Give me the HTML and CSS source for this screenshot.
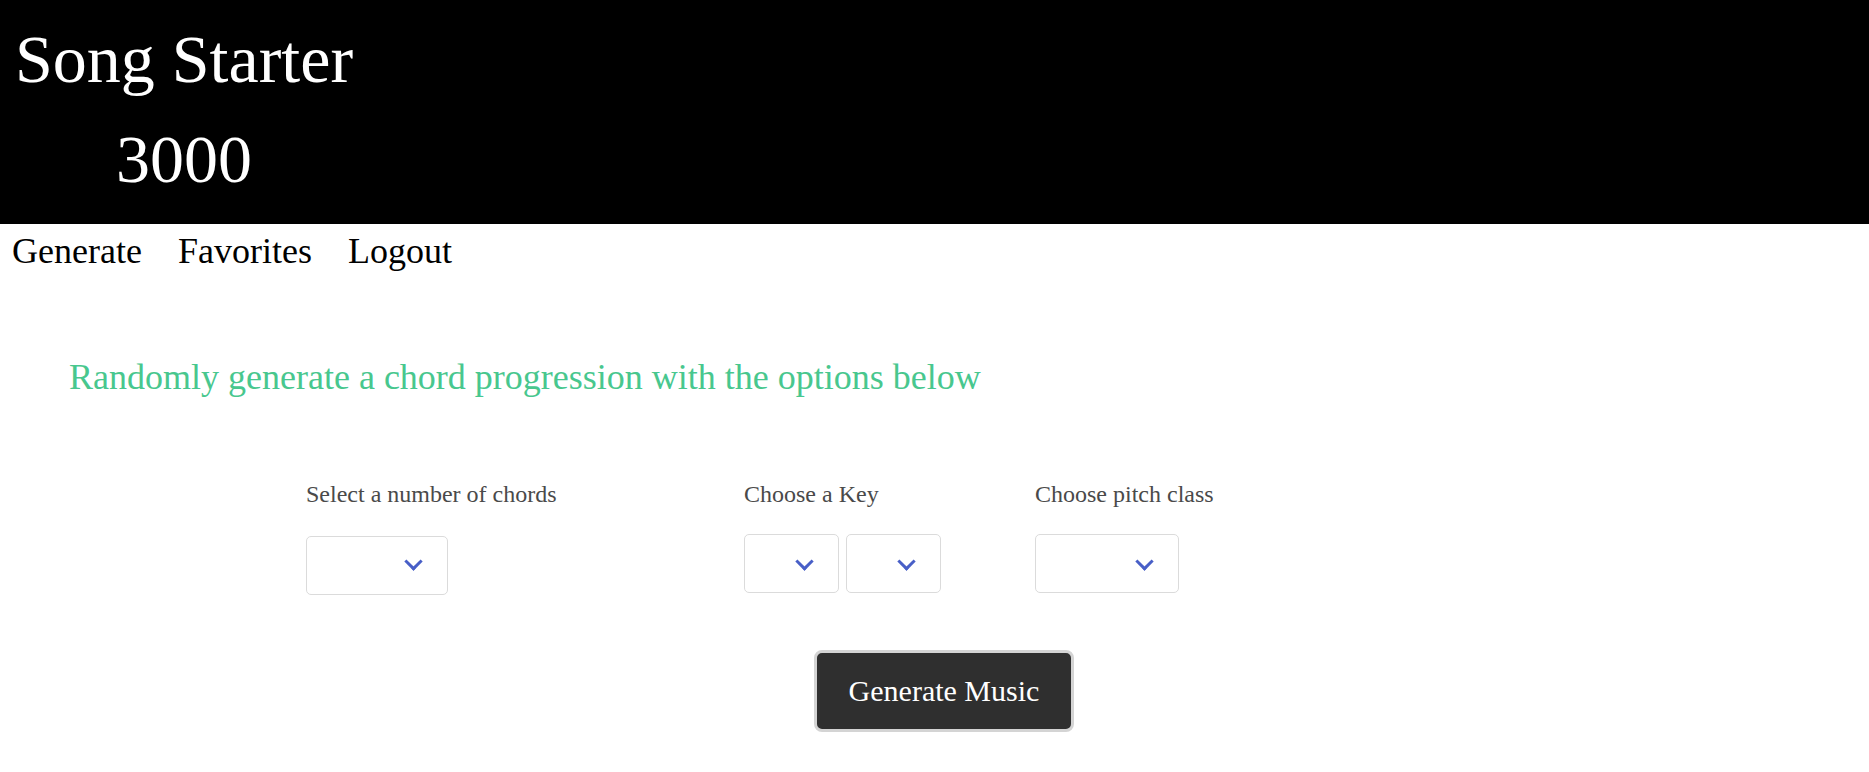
FILE: index.html
```html
<!DOCTYPE html>
<html lang="en">
<head>
<meta charset="utf-8">
<title>Song Starter 3000</title>
<link rel="stylesheet" href="styles.css">
</head>
<body>
<header class="masthead">
  <h1 class="title">Song Starter 3000</h1>
</header>
<nav class="nav">
  <a class="nav-link" href="#">Generate</a>
  <a class="nav-link" href="#">Favorites</a>
  <a class="nav-link" href="#">Logout</a>
</nav>
<main class="content">
  <h2 class="intro">Randomly generate a chord progression with the options below</h2>
  <div class="fields">
    <div class="field field-chords">
      <label class="label">Select a number of chords</label>
      <div class="controls">
        <div class="select select-wide"><select></select></div>
      </div>
    </div>
    <div class="field field-key">
      <label class="label">Choose a Key</label>
      <div class="controls">
        <div class="select select-narrow"><select></select></div>
        <div class="select select-narrow"><select></select></div>
      </div>
    </div>
    <div class="field field-pitch">
      <label class="label">Choose pitch class</label>
      <div class="controls">
        <div class="select select-pitch"><select></select></div>
      </div>
    </div>
  </div>
  <div class="actions">
    <button class="btn-generate" type="button">Generate Music</button>
  </div>
</main>
</body>
</html>
```
FILE: styles.css
```css
html, body {
  margin: 0;
  padding: 0;
  background: #ffffff;
}

body {
  font-family: "Liberation Serif", "Times New Roman", serif;
  color: #000000;
}

.masthead {
  background: #000000;
  height: 224px;
  box-sizing: border-box;
  padding-top: 9px;
}

.title {
  margin: 0 0 0 8px;
  width: 352px;
  text-align: center;
  font-size: 68px;
  line-height: 100px;
  font-weight: normal;
  color: #ffffff;
}

.nav {
  display: flex;
  gap: 36px;
  padding: 7px 0 0 12px;
  font-size: 36px;
  line-height: 41px;
}

.nav-link {
  color: #000000;
  text-decoration: none;
}

.content {
  padding-top: 85px;
}

.intro {
  margin: 0;
  padding-left: 69px;
  font-size: 36px;
  line-height: 41px;
  font-weight: normal;
  color: #48c78e;
}

.fields {
  display: flex;
  margin-top: 82px;
  padding-left: 306px;
}

.field {
  display: flex;
  flex-direction: column;
}

.field-chords {
  width: 438px;
}

.field-key {
  width: 291px;
}

.label {
  display: block;
  font-size: 24px;
  line-height: 28px;
  color: #4a4a4a;
}

.controls {
  display: flex;
  gap: 7px;
  margin-top: 26px;
}

.field-chords .controls {
  margin-top: 28px;
}

.select {
  position: relative;
  height: 59px;
}

.select select {
  appearance: none;
  -webkit-appearance: none;
  display: block;
  width: 100%;
  height: 100%;
  margin: 0;
  box-sizing: border-box;
  border: 1px solid #dbdbdb;
  border-radius: 5px;
  background: #ffffff;
  font-family: inherit;
  font-size: 24px;
}

.select::after {
  content: "";
  position: absolute;
  top: 21px;
  right: 28px;
  width: 10px;
  height: 10px;
  border-left: 3.5px solid #485fc7;
  border-bottom: 3.5px solid #485fc7;
  transform: rotate(-45deg);
  pointer-events: none;
}

.field-chords .select::after {
  top: 19px;
}

.select-wide {
  width: 142px;
}

.select-narrow {
  width: 95px;
}

.select-pitch {
  width: 144px;
}

.actions {
  display: flex;
  margin-top: 55px;
  padding-left: 814px;
}

.btn-generate {
  width: 260px;
  height: 82px;
  box-sizing: border-box;
  border: 3px solid #d4d4d4;
  border-radius: 8px;
  background: #2f2f2f;
  color: #ffffff;
  font-family: "Liberation Serif", "Times New Roman", serif;
  font-size: 30px;
  padding: 0;
  cursor: pointer;
}
```
